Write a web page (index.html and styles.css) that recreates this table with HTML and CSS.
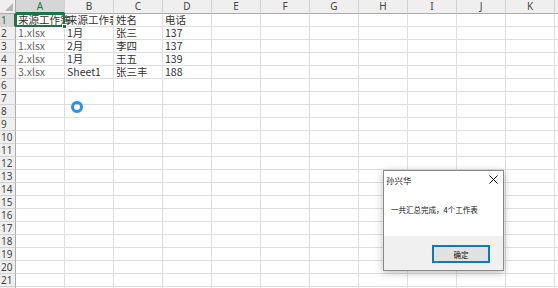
FILE: index.html
```html
<!DOCTYPE html>
<html lang="zh-CN">
<head>
<meta charset="utf-8">
<title>Sheet</title>
<link rel="stylesheet" href="styles.css">
</head>
<body>
<div class="sheet">
  <table class="grid">
    <colgroup><col class="rh"><col span="12" class="cw"></colgroup>
    <thead>
      <tr><th class="corner"></th><th class="sel">A</th><th>B</th><th>C</th><th>D</th><th>E</th><th>F</th><th>G</th><th>H</th><th>I</th><th>J</th><th>K</th><th>L</th></tr>
    </thead>
    <tbody>
      <tr><th class="sel">1</th><td class="active">来源工作簿</td><td>来源工作表</td><td>姓名</td><td>电话</td><td></td><td></td><td></td><td></td><td></td><td></td><td></td><td></td></tr>
      <tr><th>2</th><td class="dim">1.xlsx</td><td>1月</td><td>张三</td><td>137</td><td></td><td></td><td></td><td></td><td></td><td></td><td></td><td></td></tr>
      <tr><th>3</th><td class="dim">1.xlsx</td><td>2月</td><td>李四</td><td>137</td><td></td><td></td><td></td><td></td><td></td><td></td><td></td><td></td></tr>
      <tr><th>4</th><td class="dim">2.xlsx</td><td>1月</td><td>王五</td><td>139</td><td></td><td></td><td></td><td></td><td></td><td></td><td></td><td></td></tr>
      <tr><th>5</th><td class="dim">3.xlsx</td><td>Sheet1</td><td>张三丰</td><td>188</td><td></td><td></td><td></td><td></td><td></td><td></td><td></td><td></td></tr>
      <tr><th>6</th><td></td><td></td><td></td><td></td><td></td><td></td><td></td><td></td><td></td><td></td><td></td><td></td></tr>
      <tr><th>7</th><td></td><td></td><td></td><td></td><td></td><td></td><td></td><td></td><td></td><td></td><td></td><td></td></tr>
      <tr><th>8</th><td></td><td></td><td></td><td></td><td></td><td></td><td></td><td></td><td></td><td></td><td></td><td></td></tr>
      <tr><th>9</th><td></td><td></td><td></td><td></td><td></td><td></td><td></td><td></td><td></td><td></td><td></td><td></td></tr>
      <tr><th>10</th><td></td><td></td><td></td><td></td><td></td><td></td><td></td><td></td><td></td><td></td><td></td><td></td></tr>
      <tr><th>11</th><td></td><td></td><td></td><td></td><td></td><td></td><td></td><td></td><td></td><td></td><td></td><td></td></tr>
      <tr><th>12</th><td></td><td></td><td></td><td></td><td></td><td></td><td></td><td></td><td></td><td></td><td></td><td></td></tr>
      <tr><th>13</th><td></td><td></td><td></td><td></td><td></td><td></td><td></td><td></td><td></td><td></td><td></td><td></td></tr>
      <tr><th>14</th><td></td><td></td><td></td><td></td><td></td><td></td><td></td><td></td><td></td><td></td><td></td><td></td></tr>
      <tr><th>15</th><td></td><td></td><td></td><td></td><td></td><td></td><td></td><td></td><td></td><td></td><td></td><td></td></tr>
      <tr><th>16</th><td></td><td></td><td></td><td></td><td></td><td></td><td></td><td></td><td></td><td></td><td></td><td></td></tr>
      <tr><th>17</th><td></td><td></td><td></td><td></td><td></td><td></td><td></td><td></td><td></td><td></td><td></td><td></td></tr>
      <tr><th>18</th><td></td><td></td><td></td><td></td><td></td><td></td><td></td><td></td><td></td><td></td><td></td><td></td></tr>
      <tr><th>19</th><td></td><td></td><td></td><td></td><td></td><td></td><td></td><td></td><td></td><td></td><td></td><td></td></tr>
      <tr><th>20</th><td></td><td></td><td></td><td></td><td></td><td></td><td></td><td></td><td></td><td></td><td></td><td></td></tr>
      <tr><th>21</th><td></td><td></td><td></td><td></td><td></td><td></td><td></td><td></td><td></td><td></td><td></td><td></td></tr>
      <tr><th>22</th><td></td><td></td><td></td><td></td><td></td><td></td><td></td><td></td><td></td><td></td><td></td><td></td></tr>
    </tbody>
  </table>

  <div class="spinner"></div>

  <div class="dialog">
    <div class="dlg-title">
      <span>孙兴华</span>
      <svg class="dlg-close" width="9" height="9" viewBox="0 0 9 9"><path d="M0.5 0.5L8.5 8.5M8.5 0.5L0.5 8.5" stroke="#111" stroke-width="1" fill="none"/></svg>
    </div>
    <div class="dlg-body">一共汇总完成，4个工作表</div>
    <div class="dlg-foot"><button class="dlg-btn">确定</button></div>
  </div>
</div>
</body>
</html>
```

FILE: styles.css
```css
html, body {
  margin: 0;
  padding: 0;
  background: #fff;
}
.sheet {
  position: relative;
  width: 558px;
  height: 288px;
  overflow: hidden;
  font-family: "Noto Sans CJK SC", "Noto Sans", sans-serif;
}
.grid {
  border-collapse: separate;
  border-spacing: 0;
  table-layout: fixed;
  width: 604px;
}
.grid col.rh { width: 16px; }
.grid col.cw { width: 49px; }
.grid thead th {
  box-sizing: border-box;
  height: 14px;
  padding: 0;
  background: #efefef;
  border-right: 1px solid #d2d2d2;
  border-bottom: 1px solid #ababab;
  font: 10px/13px "Noto Sans", sans-serif;
  color: #444;
  font-weight: normal;
  text-align: center;
}
.grid thead th.sel {
  background: #d6d6d6;
  color: #217346;
  border-bottom: 2px solid #217346;
  line-height: 12px;
}
.grid thead th.corner {
  position: relative;
  border-right-color: #ababab;
}
.grid thead th.corner::after {
  content: "";
  position: absolute;
  right: 2px;
  bottom: 2px;
  border-style: solid;
  border-width: 0 0 8px 8px;
  border-color: transparent transparent #b7b7b7 transparent;
}
.grid tbody th {
  box-sizing: border-box;
  height: 13px;
  padding: 0 0 0 1px;
  background: #efefef;
  border-right: 1px solid #ababab;
  border-bottom: 1px solid #d2d2d2;
  font: 10px/12px "Noto Sans", sans-serif;
  color: #444;
  font-weight: normal;
  text-align: left;
}
.grid tbody th.sel {
  background: #d6d6d6;
  color: #217346;
  border-right: 2px solid #217346;
}
.grid td {
  box-sizing: border-box;
  height: 13px;
  padding: 0 0 0 2px;
  border-right: 1px solid #dedede;
  border-bottom: 1px solid #dedede;
  font-size: 10.5px;
  line-height: 12px;
  color: #333;
  white-space: nowrap;
  overflow: hidden;
  text-overflow: clip;
}
.grid td.dim { color: #666; }
.grid td.active {
  position: relative;
  overflow: visible;
}
.grid td.active::after {
  content: "";
  position: absolute;
  left: -1px;
  top: -1px;
  right: -1px;
  bottom: -1px;
  border: 2px solid #217346;
  pointer-events: none;
}
.grid td.active::before {
  content: "";
  position: absolute;
  right: -3px;
  bottom: -3px;
  width: 5px;
  height: 5px;
  background: #217346;
  border: 1px solid #fff;
  box-sizing: border-box;
  z-index: 2;
}
.spinner {
  position: absolute;
  left: 71px;
  top: 101px;
  width: 12px;
  height: 12px;
  box-sizing: border-box;
  border: 3px solid #2b8ef2;
  border-radius: 50%;
  box-shadow: 0 0 1px #8cc6ff;
}
.dialog {
  position: absolute;
  left: 383px;
  top: 170px;
  width: 121px;
  height: 101px;
  box-sizing: border-box;
  border: 1px solid #8a8a8a;
  background: #fff;
  box-shadow: 0 2px 8px rgba(0, 0, 0, 0.25);
  display: flex;
  flex-direction: column;
  font-family: "Noto Sans CJK SC", sans-serif;
}
.dlg-title {
  height: 17px;
  display: flex;
  align-items: center;
  justify-content: space-between;
  padding: 0 5px 0 2px;
  font-size: 8.5px;
  color: #222;
}
.dlg-close { display: block; }
.dlg-body {
  flex: 1;
  padding: 17px 0 0 7px;
  font-size: 7.5px;
  line-height: 10px;
  color: #111;
}
.dlg-foot {
  height: 34px;
  background: #f0f0f0;
  display: flex;
  justify-content: flex-end;
  align-items: flex-start;
  padding: 9px 13px 0 0;
  box-sizing: border-box;
}
.dlg-btn {
  width: 58px;
  height: 18px;
  margin: 0;
  padding: 0;
  box-sizing: border-box;
  border: 2px solid #0078d7;
  background: #e1e1e1;
  font-family: "Noto Sans CJK SC", sans-serif;
  font-size: 7.5px;
  color: #111;
  box-shadow: inset 0 0 0 1px #e1e1e1;
}
```
